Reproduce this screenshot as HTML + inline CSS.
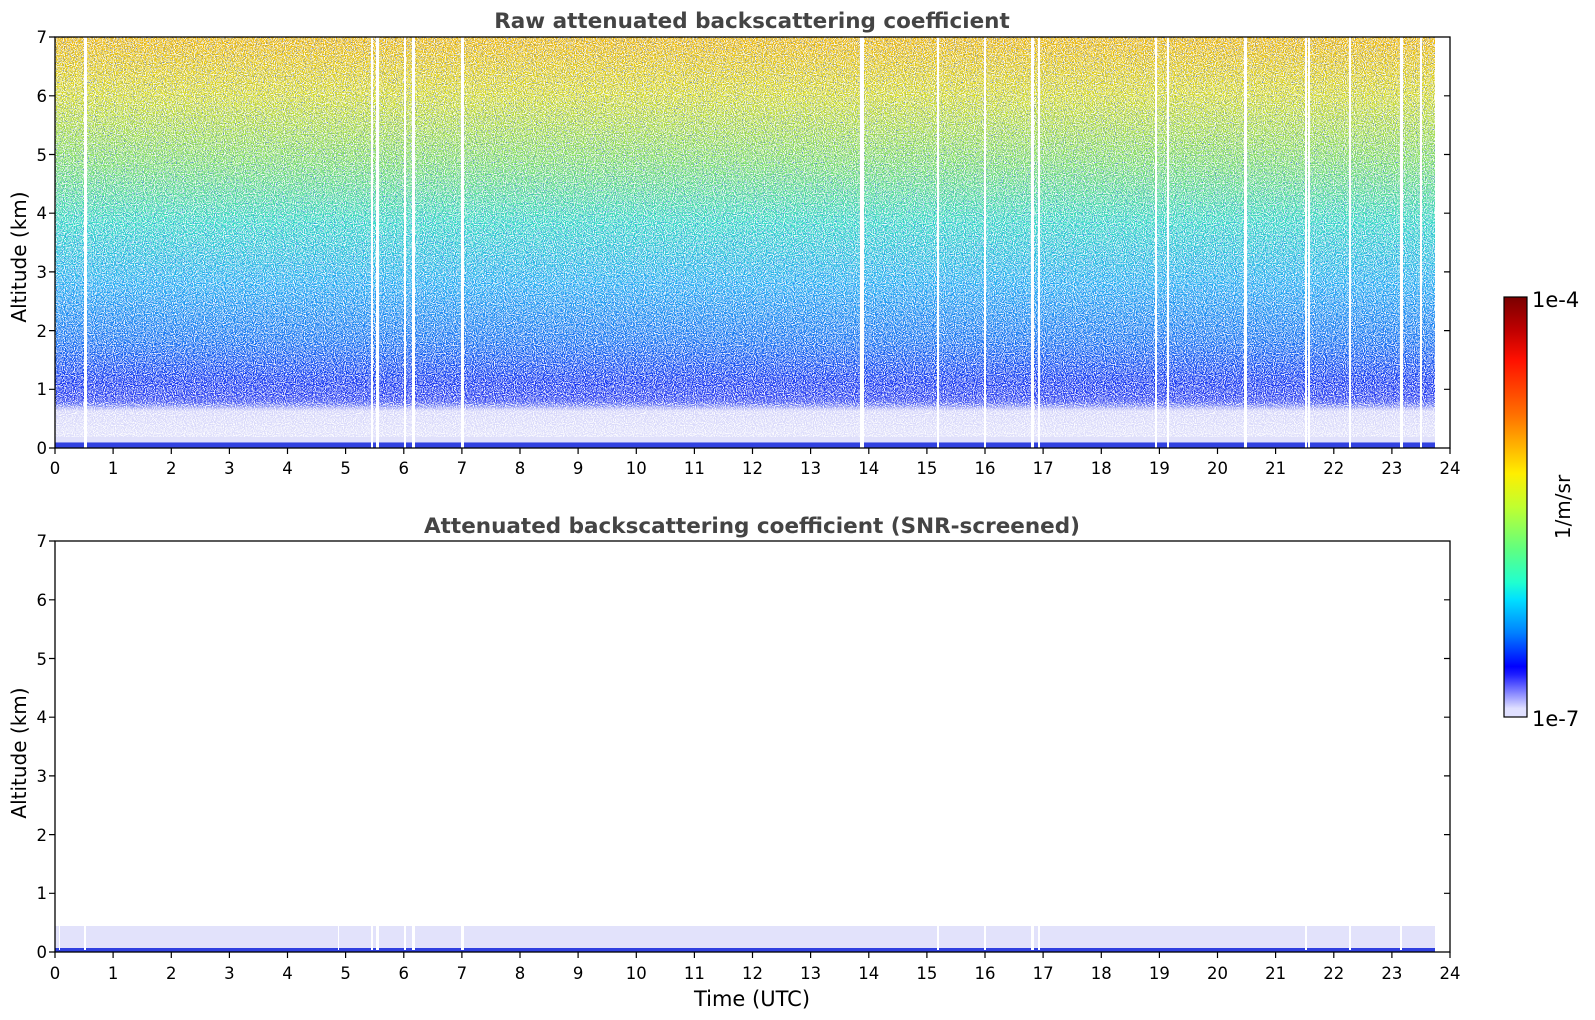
<!DOCTYPE html>
<html><head><meta charset="utf-8"><style>
html,body{margin:0;padding:0;background:#fff;width:1595px;height:1020px;overflow:hidden}
svg{display:block;font-family:"DejaVu Sans","Liberation Sans",sans-serif}
</style></head><body>
<svg width="1595" height="1020" viewBox="0 0 1595 1020" xmlns="http://www.w3.org/2000/svg">
<defs>
<linearGradient id="g1" x1="0" y1="0" x2="0" y2="1">
<stop offset="0" stop-color="#f2b800"/>
<stop offset="0.14" stop-color="#d8dc20"/>
<stop offset="0.3" stop-color="#80e060"/>
<stop offset="0.45" stop-color="#30dcc0"/>
<stop offset="0.6" stop-color="#20b0f0"/>
<stop offset="0.74" stop-color="#1070f0"/>
<stop offset="0.84" stop-color="#1030f0"/>
<stop offset="0.885" stop-color="#3040f0"/>
<stop offset="0.91" stop-color="#d4d4fa"/>
<stop offset="0.985" stop-color="#e2e2fb"/>
<stop offset="0.988" stop-color="#3242e0"/>
<stop offset="1" stop-color="#3242e0"/>
</linearGradient>
<linearGradient id="cb" x1="0" y1="0" x2="0" y2="1">
<stop offset="0" stop-color="#7a0000"/>
<stop offset="0.08" stop-color="#c00000"/>
<stop offset="0.15" stop-color="#ff1000"/>
<stop offset="0.28" stop-color="#ff7000"/>
<stop offset="0.42" stop-color="#ffee00"/>
<stop offset="0.5" stop-color="#c0ff30"/>
<stop offset="0.6" stop-color="#60ff80"/>
<stop offset="0.68" stop-color="#20ffd0"/>
<stop offset="0.72" stop-color="#00e0ff"/>
<stop offset="0.8" stop-color="#0080ff"/>
<stop offset="0.88" stop-color="#0000ff"/>
<stop offset="0.9" stop-color="#2020ff"/>
<stop offset="0.92" stop-color="#5050ff"/>
<stop offset="0.94" stop-color="#8080ff"/>
<stop offset="0.96" stop-color="#b0b0ff"/>
<stop offset="0.98" stop-color="#e0e0ff"/>
<stop offset="1" stop-color="#e0e0ff"/>
</linearGradient>
<filter id="nz" x="0" y="0" width="100%" height="100%">
<feTurbulence type="fractalNoise" baseFrequency="0.9" numOctaves="1" seed="4"/>
<feColorMatrix type="matrix" values="0 0 0 0 1  0 0 0 0 1  0 0 0 0 1  7 0 0 0 -3.2"/>
</filter>
<filter id="nz2" x="0" y="0" width="100%" height="100%">
<feTurbulence type="fractalNoise" baseFrequency="0.85" numOctaves="1" seed="9"/>
<feColorMatrix type="matrix" values="0 0 0 0 0.05  0 0 0 0 0.15  0 0 0 0 0.95  0 7 0 0 -3.9"/>
</filter>
<clipPath id="c1"><rect x="55" y="37" width="1395" height="411"/></clipPath>
</defs>

<text x="752" y="28" text-anchor="middle" font-weight="bold" font-size="21.5" fill="#444">Raw attenuated backscattering coefficient</text>
<g clip-path="url(#c1)">
<rect x="55" y="37" width="1380" height="411" fill="url(#g1)"/>
<rect x="55" y="37" width="1380" height="370" filter="url(#nz2)" opacity="0.8"/>
<rect x="55" y="37" width="1380" height="400" filter="url(#nz)" opacity="0.9"/>
<g fill="#fff">
<rect x="84" y="37" width="3" height="411"/>
<rect x="371" y="37" width="2" height="411"/>
<rect x="376" y="37" width="3" height="411"/>
<rect x="404" y="37" width="2" height="411"/>
<rect x="412" y="37" width="3" height="411"/>
<rect x="461" y="37" width="3" height="411"/>
<rect x="860" y="37" width="4" height="411"/>
<rect x="937" y="37" width="2" height="411"/>
<rect x="984" y="37" width="2" height="411"/>
<rect x="1031" y="37" width="3" height="411"/>
<rect x="1038" y="37" width="2" height="411"/>
<rect x="1155" y="37" width="2" height="411"/>
<rect x="1167" y="37" width="2" height="411"/>
<rect x="1244" y="37" width="3" height="411"/>
<rect x="1305" y="37" width="2" height="411"/>
<rect x="1308" y="37" width="2" height="411"/>
<rect x="1349" y="37" width="2" height="411"/>
<rect x="1400" y="37" width="3" height="411"/>
<rect x="1420" y="37" width="2" height="411"/>
</g>
</g>
<rect x="55" y="37" width="1395" height="411" fill="none" stroke="#000" stroke-width="1.3"/>
<path stroke="#000" stroke-width="1.2" fill="none" d="
M55 448v6M113.1 448v6M171.3 448v6M229.4 448v6M287.5 448v6M345.6 448v6M403.8 448v6M461.9 448v6M520 448v6M578.1 448v6M636.3 448v6M694.4 448v6M752.5 448v6M810.6 448v6M868.8 448v6M926.9 448v6M985 448v6M1043.1 448v6M1101.3 448v6M1159.4 448v6M1217.5 448v6M1275.6 448v6M1333.8 448v6M1391.9 448v6M1450 448v6
M49 448h6M49 389.3h6M49 330.6h6M49 271.9h6M49 213.2h6M49 154.5h6M49 95.8h6M49 37h6
M1444 389.3h6M1444 330.6h6M1444 271.9h6M1444 213.2h6M1444 154.5h6M1444 95.8h6"/>
<g font-size="16.5" text-anchor="end" fill="#000">
<text x="47" y="454">0</text><text x="47" y="395">1</text><text x="47" y="337">2</text><text x="47" y="278">3</text><text x="47" y="219">4</text><text x="47" y="161">5</text><text x="47" y="102">6</text><text x="47" y="43">7</text>
</g>
<g font-size="16.5" text-anchor="middle" fill="#000">
<text x="55" y="474">0</text><text x="113.1" y="474">1</text><text x="171.3" y="474">2</text><text x="229.4" y="474">3</text><text x="287.5" y="474">4</text><text x="345.6" y="474">5</text><text x="403.8" y="474">6</text><text x="461.9" y="474">7</text><text x="520" y="474">8</text><text x="578.1" y="474">9</text><text x="636.3" y="474">10</text><text x="694.4" y="474">11</text><text x="752.5" y="474">12</text><text x="810.6" y="474">13</text><text x="868.8" y="474">14</text><text x="926.9" y="474">15</text><text x="985" y="474">16</text><text x="1043.1" y="474">17</text><text x="1101.3" y="474">18</text><text x="1159.4" y="474">19</text><text x="1217.5" y="474">20</text><text x="1275.6" y="474">21</text><text x="1333.8" y="474">22</text><text x="1391.9" y="474">23</text><text x="1450" y="474">24</text>
</g>
<text transform="translate(26,257) rotate(-90)" text-anchor="middle" font-size="20" fill="#000">Altitude (km)</text>

<text x="752" y="533" text-anchor="middle" font-weight="bold" font-size="21.5" fill="#444">Attenuated backscattering coefficient (SNR-screened)</text>
<rect x="55" y="926" width="1380" height="23" fill="#e2e2fb"/>
<rect x="55" y="948" width="1380" height="4" fill="#3040e0"/>
<g fill="#fff">
<rect x="59" y="926" width="1" height="24"/><rect x="84" y="926" width="2" height="24"/><rect x="338" y="926" width="1" height="24"/><rect x="371" y="926" width="2" height="24"/><rect x="376" y="926" width="3" height="24"/><rect x="404" y="926" width="2" height="24"/><rect x="412" y="926" width="3" height="24"/><rect x="461" y="926" width="3" height="24"/><rect x="937" y="926" width="2" height="24"/><rect x="984" y="926" width="2" height="24"/><rect x="1031" y="926" width="3" height="24"/><rect x="1038" y="926" width="2" height="24"/><rect x="1305" y="926" width="2" height="24"/><rect x="1349" y="926" width="2" height="24"/><rect x="1400" y="926" width="2" height="24"/>
</g>
<rect x="55" y="541" width="1395" height="411" fill="none" stroke="#000" stroke-width="1.3"/>
<path stroke="#000" stroke-width="1.2" fill="none" d="
M55 952v6M113.1 952v6M171.3 952v6M229.4 952v6M287.5 952v6M345.6 952v6M403.8 952v6M461.9 952v6M520 952v6M578.1 952v6M636.3 952v6M694.4 952v6M752.5 952v6M810.6 952v6M868.8 952v6M926.9 952v6M985 952v6M1043.1 952v6M1101.3 952v6M1159.4 952v6M1217.5 952v6M1275.6 952v6M1333.8 952v6M1391.9 952v6M1450 952v6
M49 952h6M49 893.3h6M49 834.6h6M49 775.9h6M49 717.2h6M49 658.5h6M49 599.8h6M49 541h6
M1444 893.3h6M1444 834.6h6M1444 775.9h6M1444 717.2h6M1444 658.5h6M1444 599.8h6"/>
<g font-size="16.5" text-anchor="end" fill="#000">
<text x="47" y="958">0</text><text x="47" y="899">1</text><text x="47" y="841">2</text><text x="47" y="782">3</text><text x="47" y="723">4</text><text x="47" y="665">5</text><text x="47" y="606">6</text><text x="47" y="547">7</text>
</g>
<g font-size="16.5" text-anchor="middle" fill="#000">
<text x="55" y="979">0</text><text x="113.1" y="979">1</text><text x="171.3" y="979">2</text><text x="229.4" y="979">3</text><text x="287.5" y="979">4</text><text x="345.6" y="979">5</text><text x="403.8" y="979">6</text><text x="461.9" y="979">7</text><text x="520" y="979">8</text><text x="578.1" y="979">9</text><text x="636.3" y="979">10</text><text x="694.4" y="979">11</text><text x="752.5" y="979">12</text><text x="810.6" y="979">13</text><text x="868.8" y="979">14</text><text x="926.9" y="979">15</text><text x="985" y="979">16</text><text x="1043.1" y="979">17</text><text x="1101.3" y="979">18</text><text x="1159.4" y="979">19</text><text x="1217.5" y="979">20</text><text x="1275.6" y="979">21</text><text x="1333.8" y="979">22</text><text x="1391.9" y="979">23</text><text x="1450" y="979">24</text>
</g>
<text transform="translate(26,753) rotate(-90)" text-anchor="middle" font-size="20" fill="#000">Altitude (km)</text>
<text x="752" y="1006" text-anchor="middle" font-size="21" fill="#000">Time (UTC)</text>

<rect x="1504" y="297" width="23" height="420" fill="url(#cb)" stroke="#000" stroke-width="1.2"/>
<text x="1532" y="307" font-size="21" fill="#000">1e-4</text>
<text x="1532" y="726" font-size="21" fill="#000">1e-7</text>
<text transform="translate(1570,507) rotate(-90)" text-anchor="middle" font-size="20" fill="#000">1/m/sr</text>
</svg>
</body></html>
